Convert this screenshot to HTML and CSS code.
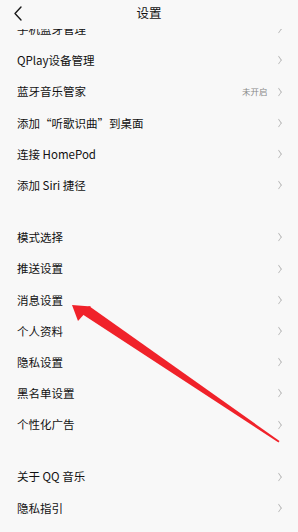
FILE: index.html
```html
<!DOCTYPE html>
<html lang="zh-CN">
<head>
    <meta charset="UTF-8">
    <meta name="viewport" content="width=device-width, initial-scale=1.0">
    <title>设置</title>
    <link rel="stylesheet" href="styles.css">
</head>
<body>
    <div class="header">
        <div class="back">
            <svg width="10" height="15" viewBox="0 0 10 15"><path d="M8 1 L2 7.5 L8 14" fill="none" stroke="#1a1a1a" stroke-width="1.4" stroke-linecap="round" stroke-linejoin="round"/></svg>
        </div>
        <div class="title">设置</div>
        <div></div>
    </div>
    <div class="viewport">
        <div class="list">
            <div class="group">
                <div class="row"><span>手机蓝牙管理</span><i class="chev"></i></div>
                <div class="row"><span>QPlay设备管理</span><i class="chev"></i></div>
                <div class="row"><span>蓝牙音乐管家</span><span class="right"><em class="state">未开启</em><i class="chev"></i></span></div>
                <div class="row"><span>添加“听歌识曲”到桌面</span><i class="chev"></i></div>
                <div class="row"><span>连接 HomePod</span><i class="chev"></i></div>
                <div class="row"><span>添加 Siri 捷径</span><i class="chev"></i></div>
            </div>
            <div class="group">
                <div class="row"><span>模式选择</span><i class="chev"></i></div>
                <div class="row"><span>推送设置</span><i class="chev"></i></div>
                <div class="row"><span>消息设置</span><i class="chev"></i></div>
                <div class="row"><span>个人资料</span><i class="chev"></i></div>
                <div class="row"><span>隐私设置</span><i class="chev"></i></div>
                <div class="row"><span>黑名单设置</span><i class="chev"></i></div>
                <div class="row"><span>个性化广告</span><i class="chev"></i></div>
            </div>
            <div class="group">
                <div class="row"><span>关于 QQ 音乐</span><i class="chev"></i></div>
                <div class="row"><span>隐私指引</span><i class="chev"></i></div>
            </div>
        </div>
    </div>
    <!-- red annotation arrow drawn over the screenshot -->
    <svg class="mark" width="298" height="532" viewBox="0 0 298 532">
        <polygon points="72,305 91,306.5 78,321" fill="#f0222a"/>
        <polygon points="89,306 279.5,441 278.5,442.5 82,314" fill="#f0222a"/>
    </svg>
</body>
</html>
```

FILE: styles.css
```css
* {
    margin: 0;
    padding: 0;
    box-sizing: border-box;
}
html, body {
    width: 100%;
    height: 100%;
    overflow: hidden;
}
body {
    position: relative;
    background: #f8f8f8;
    font-family: "Noto Sans CJK SC", "Noto Sans", sans-serif;
    color: #111;
}
.header {
    display: grid;
    grid-template-columns: 40px 1fr 40px;
    height: 29px;
    padding-bottom: 3px;
    background: #f8f8f8;
}
.back {
    display: flex;
    align-items: center;
    padding-left: 13px;
}
.back svg {
    display: block;
}
.title {
    text-align: center;
    font-size: 12.5px;
    line-height: 26px;
    color: #111;
}
.viewport {
    height: 503px;
    overflow: hidden;
}
.list {
    margin-top: -15.6px; /* list is scrolled a little */
}
.group + .group {
    margin-top: 21px;
}
.row {
    display: flex;
    align-items: center;
    justify-content: space-between;
    height: 31.2px;
    padding: 0 16px 0 17px;
    font-size: 11.5px;
}
.right {
    display: flex;
    align-items: center;
    gap: 8px;
}
.state {
    font-style: normal;
    font-size: 8.5px;
    color: #888;
}
.chev {
    display: block;
    width: 5.5px;
    height: 5.5px;
    margin-right: 1px;
    border-top: 1px solid #b0b0b0;
    border-right: 1px solid #b0b0b0;
    transform: scaleX(0.7) rotate(45deg);
}
.mark {
    position: absolute;
    left: 0;
    top: 0;
    pointer-events: none;
}
```
